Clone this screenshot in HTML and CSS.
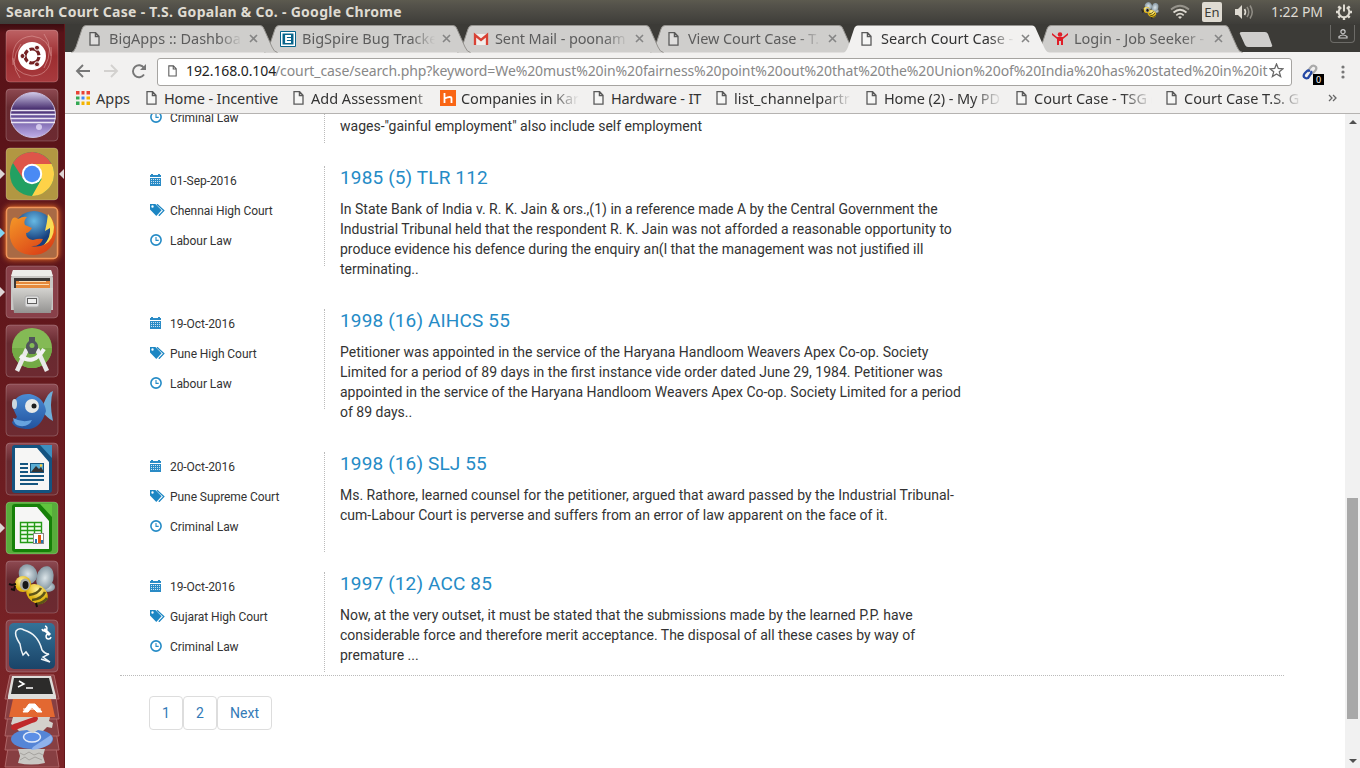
FILE: index.html
```
<!DOCTYPE html>
<html lang="en">
<head>
<meta charset="utf-8">
<title>Search Court Case - T.S. Gopalan &amp; Co.</title>
<link rel="stylesheet" href="styles.css">
</head>
<body>
<svg class="defs" width="0" height="0">
  <defs>
    <linearGradient id="tileRed" x2="0" y2="1"><stop offset="0" stop-color="#8e4a52"/><stop offset=".35" stop-color="#682a30"/><stop offset="1" stop-color="#6d2a31"/></linearGradient>
    <linearGradient id="ubuntu" x2="0" y2="1"><stop offset="0" stop-color="#bd6264"/><stop offset=".5" stop-color="#9d2d30"/><stop offset="1" stop-color="#a83a3e"/></linearGradient>
    <linearGradient id="eclipse" x2="0" y2="1"><stop offset="0" stop-color="#cfc8e6"/><stop offset=".38" stop-color="#442a6c"/><stop offset=".55" stop-color="#6a55a0"/><stop offset="1" stop-color="#bfaee8"/></linearGradient>
    <linearGradient id="steel" x2="0" y2="1"><stop offset="0" stop-color="#d4d3d0"/><stop offset="1" stop-color="#949391"/></linearGradient>
    <radialGradient id="globe" cx=".5" cy=".25"><stop offset="0" stop-color="#67b9e4"/><stop offset="1" stop-color="#173f7d"/></radialGradient>
    <linearGradient id="fox" x2=".8" y2="1"><stop offset="0" stop-color="#f59a28"/><stop offset="1" stop-color="#d93d16"/></linearGradient>
    <linearGradient id="fish" x2="0" y2="1"><stop offset="0" stop-color="#4a8bd4"/><stop offset="1" stop-color="#22539e"/></linearGradient>
    <linearGradient id="navy" x2="0" y2="1"><stop offset="0" stop-color="#347298"/><stop offset="1" stop-color="#1a4468"/></linearGradient>
    <radialGradient id="wing"><stop offset="0" stop-color="#dce5e9"/><stop offset="1" stop-color="#8799a4"/></radialGradient>
    <radialGradient id="yellow" cx=".4" cy=".3"><stop offset="0" stop-color="#fff49a"/><stop offset="1" stop-color="#e0b413"/></radialGradient>
    <symbol id="page" viewBox="0 0 11 14"><path d="M1 .7h5.6L10 4.2v9H1zM6.4.9v3.6h3.5" fill="#fff" fill-opacity=".35" stroke="#5a5a5a" stroke-width="1.3"/></symbol>
    <symbol id="calendar" viewBox="0 0 12 12"><path d="M0 1h1V0h2v1h5V0h2v1h1v2H0zM0 4h11v8H0z" fill="#2a8bc6"/><path d="M1 5.500h9M1 7.500h9M1 9.500h9" stroke="#fff" stroke-opacity=".75" stroke-dasharray="1 1" shape-rendering="crispEdges"/></symbol>
    <symbol id="tags" viewBox="0 0 15 12"><path fill-rule="evenodd" d="M0 0h5.4l6.2 6.3L6.3 12 0 5.5zM2.5 1.3a1.2 1.2 0 100 2.4 1.2 1.2 0 000-2.4z" fill="#1c86c3"/><path d="M7 .3l6.8 6.3-5 5.2" fill="none" stroke="#1c86c3" stroke-width="1.3"/></symbol>
    <symbol id="clock" viewBox="0 0 12 12"><circle cx="6" cy="6" r="5.1" fill="none" stroke="#258bc6" stroke-width="1.6"/><path d="M6 3v3.4h2.7" fill="none" stroke="#258bc6" stroke-width="1.1"/></symbol>
    <symbol id="bee" viewBox="0 0 52 52">
      <ellipse cx="42" cy="26" rx="7" ry="5" fill="url(#wing)"/>
      <ellipse cx="22" cy="13" rx="9" ry="10" transform="rotate(-30 22 13)" fill="url(#wing)"/>
      <ellipse cx="39" cy="17" rx="8.500" ry="12" transform="rotate(14 39 17)" fill="url(#wing)"/>
      <ellipse cx="31" cy="33" rx="11.500" ry="9" transform="rotate(35 31 33)" fill="url(#yellow)"/>
      <path d="M35 27q-3 6-12 7M39 31q-3 7-13 8M41 37q-3 5-11 6" fill="none" stroke="#5c5418" stroke-width="2.500"/>
      <circle cx="17" cy="23" r="8" fill="url(#yellow)"/><ellipse cx="19" cy="23.500" rx="5" ry="6" fill="#a9aca6"/><ellipse cx="19.500" cy="24" rx="3" ry="4" fill="#171717"/>
      <path d="M10 23l-4 1-3-1M9 25l-1 4-3-1M30 42l1 4" fill="none" stroke="#160e0b" stroke-width="2"/>
    </symbol>
    <symbol id="tab" viewBox="0 0 207 28"><path d="M.5 27.5Q3 27 5 22L11 4Q12 .5 15 .5H189Q192 .5 193 4L201 22Q203 27 206.5 27.5" fill="#cfcecc" stroke="#95938f"/></symbol>
    <symbol id="tabOn" viewBox="0 0 207 28"><path d="M.5 28Q3 27 5 22L11 4Q12 .5 15 .5H189Q192 .5 193 4L201 22Q203 27 206.5 28" fill="#f2f1f0"/></symbol>
  </defs>
</svg>

<header class="panel">
  <span class="window-title">Search Court Case - T.S. Gopalan &amp; Co. - Google Chrome</span>
  <div class="indicators">
    <svg class="ind-bee" width="22" height="20"><use href="#bee" width="22" height="20"/></svg>
    <svg class="ind-wifi" width="20" height="16" viewBox="0 0 20 16" fill="none" stroke-width="1.7"><path d="M1 5.5Q10-2 19 5.5" stroke="#96938b"/><path d="M3.5 8.5Q10 3 16.500 8.500M6.300 11.300Q10 8 13.700 11.300" stroke="#dfdbd2"/><path d="M8 13q2-1.500 4 0l-2 2z" fill="#dfdbd2"/></svg>
    <span class="lang">En</span>
    <svg class="ind-sound" width="20" height="16" viewBox="0 0 20 16"><path d="M1 5h3l4-4v14l-4-4H1z" fill="#dfdbd2"/><path d="M10.500 5q2 3 0 6" fill="none" stroke="#dfdbd2" stroke-width="1.600"/><path d="M13 3q3.500 5 0 10M16 1.500q4.500 6.500 0 13" fill="none" stroke="#918e86" stroke-width="1.500"/></svg>
    <span class="time">1:22 PM</span>
    <svg class="ind-gear" width="18" height="18" viewBox="0 0 18 18" fill="none" stroke="#dfdbd2"><path d="M6.300 4.400a5.300 5.300 0 105.400 0" stroke-width="2"/><path d="M9 1.500v7" stroke-width="2"/><path d="M1 9h3M14 9h3M9 14v3M3.300 14.700l2-2M12.700 12.700l2 2M3.300 3.300l2 2M12.700 5.300l2-2" stroke-width="2.400"/></svg>
  </div>
</header>

<div class="desktop">
  <nav class="launcher">
    <svg class="tile" viewBox="0 0 52 52"><rect class="plate" width="52" height="52" rx="4" fill="url(#ubuntu)"/><path d="M7 35Q4 8 26 6q18 2 19 20M45 17q3 28-19 29Q7 43 7 28M14 48Q2 32 15 14M38 4q11 15 0 34" fill="none" stroke="#e2a4a3" opacity=".55"/><circle cx="26" cy="26" r="14" fill="#fff"/><circle cx="26" cy="26" r="7" fill="none" stroke="#742022" stroke-width="3.200" stroke-dasharray="12.600 2.060" stroke-dashoffset="-1"/><g fill="#742022" stroke="#fff"><circle cx="16.500" cy="26" r="2.500"/><circle cx="31" cy="17.700" r="2.500"/><circle cx="31" cy="34.300" r="2.500"/></g></svg>
    <svg class="tile" viewBox="0 0 52 52"><rect class="plate" width="52" height="52" rx="4" fill="url(#tileRed)"/><circle cx="27" cy="26" r="22.500" fill="url(#eclipse)" stroke="#c9bfe0"/><path d="M5 21.500h44M4.500 25.500h45M4.500 29.500h45M5 33.500h44" stroke="#eae5f3" stroke-width="1.300"/><circle cx="33" cy="38" r="3" fill="#efe8ff" opacity=".7"/></svg>
    <div class="slot"><svg class="tile" viewBox="0 0 52 52"><rect class="plate" width="52" height="52" rx="4" fill="#b29742"/><circle cx="26" cy="26" r="22" fill="#22a062"/><path d="M6.950 15A22 22 0 0145.600 16H26l-8.700 15z" fill="#de5549"/><path d="M45.600 16A22 22 0 0126 48l9.600-17L26 16z" fill="#fed248"/><circle cx="26" cy="26" r="10.200" fill="#fff"/><circle cx="26" cy="26" r="8.200" fill="#4a8af4"/></svg><i class="pip"></i><i class="pip pip-right"></i></div>
    <div class="slot"><svg class="tile glow" viewBox="0 0 52 52"><rect x=".5" y=".5" width="51" height="51" rx="4" fill="#a96a45" stroke="#f0955a" stroke-width="1.500"/><circle cx="28" cy="24" r="20" fill="url(#globe)"/><path d="M5 15Q7 8 12 12q5-3 9-2-4 4-2 8l7 3q-3 5-6 5 0 6 7 7 6-2 10-1-3 8-12 7 16 3 20-12Q50 18 43 8q10 12 6 24-5 15-21 16Q8 48 4 31q-1-9 1-16z" fill="url(#fox)"/><path d="M42 7q-1 9-3 17l5-3q1 9-6 17 10-5 10-18Q47 12 42 7z" fill="#f9dc54"/></svg><i class="pip pip-blue"></i></div>
    <div class="slot"><svg class="tile" viewBox="0 0 52 52"><rect class="plate" width="52" height="52" rx="4" fill="#884049"/><path d="M7 4h38l2 8v32H5V12z" fill="#c8c7c5"/><path d="M5 10h42L45 4H7z" fill="#ececea"/><path d="M8 12h36v15H8z" fill="#3a3736"/><path d="M10 15h34v7H10z" fill="#e5893b"/><path d="M13 15.500h27M10 18.500h33" stroke="#fbddb3"/><path d="M6 22h41l-2 25H8z" fill="url(#steel)"/><rect x="19" y="30" width="14" height="11" rx="2" fill="#ddd" stroke="#aaa"/><rect x="21.500" y="32.500" width="9" height="5" fill="#eee" stroke="#5f5f5f"/></svg><i class="pip"></i></div>
    <svg class="tile" viewBox="0 0 52 52"><rect class="plate" width="52" height="52" rx="4" fill="url(#tileRed)"/><circle cx="26" cy="23" r="20" fill="#84ba55"/><path d="M6 23a20 20 0 0040 0z" fill="#73ab45"/><path d="M21 24L11 46M31 24l10 22" stroke="#e8e8e8" stroke-width="4.500"/><path d="M14 31q14 10 24-7" fill="none" stroke="#f1f1f1" stroke-width="4"/><path d="M23 12h6v4q5 4 2 9l-2 4h-6l-2-4q-3-5 2-9z" fill="#50545b"/><circle cx="26" cy="20.500" r="2.500" fill="#84ba55"/></svg>
    <svg class="tile" viewBox="0 0 52 52"><rect class="plate" width="52" height="52" rx="4" fill="url(#tileRed)"/><path d="M37 21Q42 8 47 7q-4 12 0 30-6-3-10-9z" fill="#6eadd9"/><path d="M6 22Q10 9 24 10q14 3 16 17-5 17-17 18Q8 45 6 38l5-5z" fill="url(#fish)"/><path d="M7 34q9 5 19 2-3 7-12 6-6-1-7-8z" fill="#67a3df"/><circle cx="26" cy="22" r="7" fill="#e7e9e8"/><circle cx="28" cy="22" r="2.500" fill="#1c1d1e"/><ellipse cx="8.500" cy="20" rx="2.500" ry="5" fill="#ccd8df"/></svg>
    <svg class="tile" viewBox="0 0 52 52"><rect class="plate" width="52" height="52" rx="4" fill="url(#tileRed)"/><rect x="6" y="2" width="40" height="48" rx="3" fill="#145380"/><path d="M9 5h22l12 14v28H9z" fill="#f6f6f5"/><path d="M34 2h12v13z" fill="#3d8fc0"/><path d="M14 21h8M14 25h8M14 29h8M14 33h24M14 37h24M14 41h18" stroke="#155680" stroke-width="2"/><rect x="24.500" y="20.500" width="13" height="9" fill="#5aadd3" stroke="#155680"/><path d="M25 29l5-6 3 3 2-2 3 5z" fill="#333"/><circle cx="35" cy="22.500" r="1.300" fill="#fc3"/></svg>
    <div class="slot"><svg class="tile" viewBox="0 0 52 52"><rect class="plate" width="52" height="52" rx="4" fill="#58ac3b"/><rect x="6" y="2" width="40" height="48" rx="3" fill="#168008"/><path d="M9 5h22l12 14v28H9z" fill="#f6f6f5"/><path d="M34 2h12v13z" fill="#61c53e"/><path d="M14 20h22v20H14z" fill="#f1fdec"/><path d="M14.500 20.500h21v20h-21zM21.500 20v20M28.500 20v20M14 24.500h22M14 28.500h22M14 32.500h22M14 36.500h22" fill="none" stroke="#259a17" stroke-width="1.400"/><rect x="27.500" y="31.500" width="10" height="10" fill="#fff" stroke="#888"/><path d="M29 37h2v4h-2zM35 38h2v3h-2z" fill="#2475b0"/><path d="M32 33h3v8h-3z" fill="#e35a0a"/></svg><i class="pip"></i></div>
    <svg class="tile" viewBox="0 0 52 52"><rect class="plate" width="52" height="52" rx="4" fill="url(#tileRed)"/><use href="#bee" width="52" height="52"/></svg>
    <svg class="tile" viewBox="0 0 52 52"><rect class="plate" width="52" height="52" rx="4" fill="#884149"/><rect x="3" y="3" width="46" height="46" rx="5" fill="url(#navy)"/><path d="M23 36l-3-4-3 3q-2-4-3-11-6-9-4-13 3-4 8-1 14 4 18 20 3 4 7 4l-6 3 7 5-9-3" fill="none" stroke="#eef4f7" stroke-width="1.500"/><path d="M38 9l6 6" stroke="#fff" stroke-width="3"/><path d="M36 9a2.500 2.500 0 103-3M42 14a2.500 2.500 0 103 3" stroke="#fff" stroke-width="1.500" fill="none"/></svg>
    <svg class="stack" width="60" height="95" viewBox="0 0 60 95">
      <g stroke="#ae6668" fill="#873f42"><path d="M6 74h48l3 19H3z"/><path d="M6 57h48l3 19H3z"/><path d="M6 41h48l3 21H3z"/><path d="M6 23h48l3 22H3z"/><path d="M8 1h44l5 24H3z"/></g>
      <path d="M16 75h27l-2 7 2 7q-14 3-27 0l2-7z" fill="#c9c8c4"/><path d="M18 79l4 2 5-3 5 3 5-2 4 2M18 86l5-3 4 3 6-3 7 3" fill="none" stroke="#a5a39f"/>
      <ellipse cx="30" cy="65" rx="21" ry="10" fill="#5585d6"/><path d="M31 73l18-12q4 5-3 10-6 4-17 5z" fill="#8fb2ec"/><ellipse cx="30" cy="63" rx="8.500" ry="5" fill="#5d8fe6" stroke="#e3ecfa" stroke-width="1.500"/>
      <path d="M11 43h37l-1 4 4 2-1 5-5-1-4 4-5-1-5 3-6-3-8 1-5-5-3-2z" fill="#d3d1cc"/><path d="M9 54q0-4 6-5l14-5q6-3 7 0 0 4-6 5l-14 6q-5 3-7-1z" fill="#bf292b"/>
      <path d="M11 25h38l4 18H7z" fill="#e36831"/><path d="M21 38l6-8h6l7 8h-5l-5-5-4 5zM21 35h18" fill="#fff" stroke="#fff"/>
      <path d="M10 2h39l5 20v3H6v-3z" fill="#deddda"/><path d="M12 4h35l4 16H9z" fill="#2c2b2a"/><path d="M17 7l5 3-6 3M24 14h7" fill="none" stroke="#fff" stroke-width="1.500"/>
    </svg>
  </nav>

  <div class="browser">
    <div class="tabs">
      <div class="tab"><svg class="tab-shape"><use href="#tab"/></svg><svg class="page"><use href="#page"/></svg><span class="tab-text">BigApps :: Dashboa</span><svg class="close" viewBox="0 0 9 9"><path d="M1 1l7 7M8 1L1 8"/></svg></div>
      <div class="tab"><svg class="tab-shape"><use href="#tab"/></svg><svg class="fav" viewBox="0 0 16 16"><path d="M.500.500h15v15H.500z" fill="#fff" stroke="#08648b"/><path d="M2.500 2.500h11v11h-11z" fill="#08648b"/><path d="M11 5H6v6h5M6 8h5" fill="none" stroke="#fff" stroke-width="1.800"/></svg><span class="tab-text">BigSpire Bug Tracke</span><svg class="close" viewBox="0 0 9 9"><path d="M1 1l7 7M8 1L1 8"/></svg></div>
      <div class="tab"><svg class="tab-shape"><use href="#tab"/></svg><svg class="fav" viewBox="0 0 16 16"><path d="M1 3h14v11H1z" fill="#f2efec"/><path d="M2 14V4l6 5 6-5v10" fill="none" stroke="#d94235" stroke-width="2.300"/></svg><span class="tab-text tight">Sent Mail - poonam</span><svg class="close" viewBox="0 0 9 9"><path d="M1 1l7 7M8 1L1 8"/></svg></div>
      <div class="tab"><svg class="tab-shape"><use href="#tab"/></svg><svg class="page"><use href="#page"/></svg><span class="tab-text tight">View Court Case - T.</span><svg class="close" viewBox="0 0 9 9"><path d="M1 1l7 7M8 1L1 8"/></svg></div>
      <div class="tab active"><svg class="tab-shape"><use href="#tabOn"/></svg><svg class="page"><use href="#page"/></svg><span class="tab-text">Search Court Case -</span><svg class="close" viewBox="0 0 9 9"><path d="M1 1l7 7M8 1L1 8"/></svg></div>
      <div class="tab"><svg class="tab-shape"><use href="#tab"/></svg><svg class="fav" viewBox="0 0 16 16" fill="#e01d27"><circle cx="8" cy="3.500" r="2.300"/><path d="M0 2l5 4h6l5-4v2l-5 4v6H9v-4H7v4H5V8L0 4z"/></svg><span class="tab-text">Login - Job Seeker -</span><svg class="close" viewBox="0 0 9 9"><path d="M1 1l7 7M8 1L1 8"/></svg></div>
      <svg class="new-tab" width="34" height="17"><path d="M3 1h23q2 0 3 2l4 11q1 2-2 2H9q-2 0-3-2L1 3q-1-2 2-2z" fill="#cfcecc"/></svg>
      <div class="profile"><svg width="10" height="10" viewBox="0 0 10 10"><circle cx="5" cy="2.700" r="2.100" fill="none" stroke="#ccc" stroke-width="1.200"/><path d="M1 9V7.500Q5 4.500 9 7.500V9z" fill="none" stroke="#ccc" stroke-width="1.200"/></svg></div>
    </div>

    <div class="toolbar">
      <svg class="nav-icons" width="76" height="20" viewBox="0 0 76 20" fill="none" stroke-width="1.900"><path d="M15 10H2M8 4l-6 6 6 6" stroke="#777"/><path d="M29 10h13M36 4l6 6-6 6" stroke="#d3d1cf"/><path d="M69 13.500A6 6 0 1169 7" stroke="#777"/><path d="M71 3v6h-6z" fill="#777"/></svg>
      <div class="omnibox"><svg class="page small"><use href="#page"/></svg><span class="host">192.168.0.104</span><span class="path">/court_case/search.php?keyword=We%20must%20in%20fairness%20point%20out%20that%20the%20Union%20of%20India%20has%20stated%20in%20it</span><svg class="star" width="15" height="15" viewBox="0 0 15 15"><path d="M7.500 1l1.800 4.500 4.700.300-3.700 3 1.300 4.700-4.100-2.600-4.100 2.600 1.300-4.700-3.700-3 4.700-.300z" fill="none" stroke="#686868" stroke-width="1.300"/></svg></div>
      <div class="extension"><svg width="16" height="16" viewBox="0 0 16 16" fill="none" stroke-width="2.300"><path d="M7 8q-1-2 1-4l2-2q2-1 4 1 1 2-1 4l-2 2q-2 1-3 0" stroke="#aaa"/><path d="M9 7q1 2-1 4l-2 3q-2 1-4-1-1-2 1-4l2-2q1-1 3 0" stroke="#2548a4"/></svg><span class="badge">0</span></div>
      <svg class="more" width="4" height="14" fill="#777"><circle cx="2" cy="2" r="1.600"/><circle cx="2" cy="7" r="1.600"/><circle cx="2" cy="12" r="1.600"/></svg>
    </div>

    <div class="bookmarks">
      <a class="bm apps"><svg width="14" height="14" viewBox="0 0 14 14"><path d="M0 0h4v4H0zM5 0h4v4H5zM10 0h4v4h-4z" fill="#e94235"/><path d="M0 5h4v4H0z" fill="#34a853"/><path d="M5 5h4v4H5z" fill="#4285f4"/><path d="M10 5h4v4h-4zM5 10h4v4H5zM10 10h4v4h-4z" fill="#f4b400"/><path d="M0 10h4v4H0z" fill="#34a853"/><path d="M4.500 0v14M9.500 0v14M0 4.500h14M0 9.500h14" stroke="#f2f1f0" stroke-width="2"/></svg><span class="bm-text b0">Apps</span></a>
      <a class="bm b147"><svg class="page"><use href="#page"/></svg><span class="bm-text b1">Home - Incentive</span></a>
      <a class="bm b147"><svg class="page"><use href="#page"/></svg><span class="bm-text fade end">Add Assessment</span></a>
      <a class="bm b153"><svg class="hacker" width="16" height="16"><path d="M0 0h16v16H0z" fill="#f96514"/><path d="M4.500 3v10M4.500 8.500q7-3 7 0V13" fill="none" stroke="#fff" stroke-width="1.800"/></svg><span class="bm-text b3 fade">Companies in Kar</span></a>
      <a class="bm b123"><svg class="page"><use href="#page"/></svg><span class="bm-text b4">Hardware - IT</span></a>
      <a class="bm b150"><svg class="page"><use href="#page"/></svg><span class="bm-text b5 fade">list_channelpartr</span></a>
      <a class="bm b150"><svg class="page"><use href="#page"/></svg><span class="bm-text b6 fade">Home (2) - My PD</span></a>
      <a class="bm b150"><svg class="page"><use href="#page"/></svg><span class="bm-text b7 fade">Court Case - TSG (</span></a>
      <a class="bm b150"><svg class="page"><use href="#page"/></svg><span class="bm-text b8 fade">Court Case T.S. G</span></a>
      <svg class="overflow" width="9" height="8" viewBox="0 0 9 8"><path d="M1 1l3 3-3 3M5 1l3 3-3 3" fill="none" stroke="#666" stroke-width="1.300"/></svg>
    </div>

    <div class="viewport">
      <main class="content">
        <section class="results">
          <article class="result clipped">
            <ul class="meta"><li><svg class="ic"><use href="#clock"/></svg>Criminal Law</li></ul>
            <div class="body"><p>wages-"gainful employment" also include self employment</p></div>
          </article>
          <article class="result">
            <ul class="meta"><li><svg class="ic"><use href="#calendar"/></svg>01-Sep-2016</li><li><svg class="ic tagic"><use href="#tags"/></svg>Chennai High Court</li><li><svg class="ic"><use href="#clock"/></svg>Labour Law</li></ul>
            <div class="body"><h3>1985 (5) TLR 112</h3><p>In State Bank of India v. R. K. Jain &amp; ors.,(1) in a reference made A by the Central Government the<br>Industrial Tribunal held that the respondent R. K. Jain was not afforded a reasonable opportunity to<br>produce evidence his defence during the enquiry an(l that the management was not justified ill<br>terminating..</p></div>
          </article>
          <article class="result">
            <ul class="meta"><li><svg class="ic"><use href="#calendar"/></svg>19-Oct-2016</li><li><svg class="ic tagic"><use href="#tags"/></svg>Pune High Court</li><li><svg class="ic"><use href="#clock"/></svg>Labour Law</li></ul>
            <div class="body"><h3>1998 (16) AIHCS 55</h3><p>Petitioner was appointed in the service of the Haryana Handloom Weavers Apex Co-op. Society<br>Limited for a period of 89 days in the first instance vide order dated June 29, 1984. Petitioner was<br>appointed in the service of the Haryana Handloom Weavers Apex Co-op. Society Limited for a period<br>of 89 days..</p></div>
          </article>
          <article class="result">
            <ul class="meta"><li><svg class="ic"><use href="#calendar"/></svg>20-Oct-2016</li><li><svg class="ic tagic"><use href="#tags"/></svg>Pune Supreme Court</li><li><svg class="ic"><use href="#clock"/></svg>Criminal Law</li></ul>
            <div class="body"><h3>1998 (16) SLJ 55</h3><p>Ms. Rathore, learned counsel for the petitioner, argued that award passed by the Industrial Tribunal-<br>cum-Labour Court is perverse and suffers from an error of law apparent on the face of it.</p></div>
          </article>
          <article class="result last">
            <ul class="meta"><li><svg class="ic"><use href="#calendar"/></svg>19-Oct-2016</li><li><svg class="ic tagic"><use href="#tags"/></svg>Gujarat High Court</li><li><svg class="ic"><use href="#clock"/></svg>Criminal Law</li></ul>
            <div class="body"><h3>1997 (12) ACC 85</h3><p>Now, at the very outset, it must be stated that the submissions made by the learned P.P. have<br>considerable force and therefore merit acceptance. The disposal of all these cases by way of<br>premature ...</p></div>
          </article>
        </section>
        <div class="pagination"><a class="pg">1</a><a class="pg">2</a><a class="pg next">Next</a></div>
      </main>
      <div class="scrollbar"><i class="arrow up"></i><i class="thumb"></i><i class="arrow down"></i></div>
    </div>
  </div>
</div>
</body>
</html>
```

FILE: styles.css
```
* { box-sizing: border-box; }
body { margin: 0; width: 1360px; height: 768px; overflow: hidden; display: flex; flex-direction: column; background: #fff; font-family: "Noto Sans", sans-serif; }
.defs { position: absolute; }
svg { display: block; flex: none; }

.panel { height: 24px; flex: none; display: flex; align-items: center; justify-content: space-between; padding: 0 7px 0 6px; background: linear-gradient(#5c5a4f, #55534b 20%, #3e3d39); color: #dfdbd2; }
.window-title { font-size: 14px; font-weight: 700; line-height: 20px; white-space: nowrap; letter-spacing: 0.28px; }
.indicators { display: flex; align-items: center; height: 24px; }
.ind-bee { margin: -2px 9px 0 0; }
.ind-wifi { margin-right: 12px; }
.lang { width: 20px; height: 20px; border-radius: 2px; background: #dfdbd2; color: #3c3b37; font-size: 13px; line-height: 21px; text-align: center; margin-right: 12px; }
.ind-sound { margin-right: 17px; }
.time { width: 52px; font-size: 14px; white-space: nowrap; letter-spacing: -0.1px; margin: -2px 12px 0 0; }

.desktop { flex: 1; display: flex; min-height: 0; }
.launcher { width: 65px; flex: none; padding: 6px 0 0 6px; display: flex; flex-direction: column; gap: 7px; background: linear-gradient(#3c0c10, #591318 9px, #5d151a 30%, #7b2427 90%); border-right: 1px solid #64161a; overflow: hidden; }
.tile { width: 52px; height: 52px; overflow: visible; }
.plate { stroke: #fff; stroke-opacity: .2; }
.glow { filter: drop-shadow(0 0 3px #ff7f2a); }
.slot { position: relative; width: 59px; height: 52px; }
.pip { position: absolute; left: -6px; top: 21px; border: 5px solid transparent; border-left-color: #ded5d5; border-right-width: 0; }
.pip-right { left: 53px; border-right: 5px solid #ded5d5; border-left-width: 0; }
.pip-blue { border-left-color: #81d4f4; }
.stack { margin: -5px 0 0 -4px; }

.browser { flex: 1; min-width: 0; display: flex; flex-direction: column; }
.tabs { height: 29px; flex: none; display: flex; padding: 1px 0 0 6px; background: #3c3b37; border-bottom: 1px solid #f2f1f0; position: relative; }
.tab { position: relative; width: 193px; height: 28px; flex: none; display: flex; align-items: center; padding-left: 18px; }
.tab:nth-child(1) { z-index: 6; }
.tab:nth-child(2) { z-index: 5; }
.tab:nth-child(3) { z-index: 4; }
.tab:nth-child(4) { z-index: 3; }
.tab.active { z-index: 9; }
.tab-shape { position: absolute; left: 0; top: 0; width: 207px; height: 28px; }
.page { width: 11px; height: 14px; position: relative; }
.tab .page { margin-right: 9px; }
.fav { width: 16px; height: 16px; margin: 0 6px 0 -2px; position: relative; }
.tab-text { position: relative; top: -1px; width: 136px; white-space: nowrap; font-size: 14.500px; line-height: 26px; color: #5c5c5c; -webkit-mask-image: linear-gradient(90deg, #000 80%, transparent 98%); mask-image: linear-gradient(90deg, #000 80%, transparent 98%); }
.tab-text.tight { letter-spacing: -0.1px; }
.active .tab-text { color: #333; }
.close { position: relative; width: 9px; height: 9px; margin: -1px 0 0 4px; flex: none; fill: none; stroke: #858585; stroke-width: 1.600; }
.new-tab { margin: 6px 0 0 10px; }
.profile { width: 25px; height: 18px; margin: 0 5px 0 auto; border: 1px solid #6c6b67; border-top: 0; border-radius: 0 0 4px 4px; display: flex; align-items: center; justify-content: center; }

.toolbar { height: 33px; flex: none; display: flex; align-items: center; padding: 4px 0 0 10px; background: #f2f1f0; }
.nav-icons { margin: -2px 6px 0 0; }
.omnibox { width: 1135px; height: 28px; border: 1px solid #a6a4a1; border-radius: 3px; background: #fff; display: flex; align-items: center; padding: 0 7px 2px 10px; font-size: 14px; white-space: nowrap; }
.page.small { width: 9px; height: 12px; margin-right: 9px; }
.host { width: 89px; color: #222; letter-spacing: -0.1px; }
.path { width: 992px; color: #888; letter-spacing: -0.1px; }
.star { margin-left: 2px; }
.extension { position: relative; width: 22px; height: 16px; margin-left: 10px; }
.badge { position: absolute; left: 11px; top: 10px; width: 11px; height: 11px; background: #000; color: #fff; font-size: 9px; line-height: 11px; text-align: center; }
.more { margin-left: 17px; }

.bookmarks { height: 28px; flex: none; display: flex; align-items: center; padding: 0 0 3px 11px; background: #f2f1f0; border-bottom: 1px solid #b5b3b1; }
.bm { display: flex; align-items: center; flex: none; width: 150px; }
.bm.apps { width: 70px; }
.bm.b147 { width: 147px; }
.bm.b153 { width: 153px; }
.bm.b123 { width: 123px; }
.bm .page { margin-right: 7px; }
.bm.apps svg { margin-right: 6px; }
.hacker { margin-right: 5px; }
.bm-text { width: 118px; white-space: nowrap; font-size: 14.500px; line-height: 22px; color: #333; }
.b0 { width: 40px; }
.b1, .b3 { letter-spacing: -0.12px; }
.b4 { width: 95px; letter-spacing: -0.15px; }
.b5 { letter-spacing: 0.1px; }
.b6 { letter-spacing: -0.12px; }
.fade { -webkit-mask-image: linear-gradient(90deg, #000 75%, transparent); mask-image: linear-gradient(90deg, #000 75%, transparent); }
.end { -webkit-mask-image: linear-gradient(90deg, #000 88%, transparent); mask-image: linear-gradient(90deg, #000 88%, transparent); }
.overflow { margin-left: 12px; }

.viewport { flex: 1; min-height: 0; display: flex; font-family: Roboto, sans-serif; color: #333; }
.content { flex: 1; min-width: 0; overflow: hidden; }
.results { margin: 0 61px 0 55px; padding-left: 30px; border-bottom: 1px dotted #bbb; }
.result { display: flex; align-items: flex-start; margin-bottom: 20px; }
.meta { list-style: none; margin: 0; padding: 0; width: 175px; height: 100px; border-right: 1px dotted #bbb; font-size: 12px; letter-spacing: -0.06px; }
.meta li { display: flex; align-items: center; height: 30px; }
.ic { width: 12px; height: 12px; margin: -2px 8px 0 0; }
.tagic { width: 15px; margin-right: 5px; }
.body { padding: 0 0 10px 15px; white-space: nowrap; }
h3 { margin: 0; height: 33px; padding-top: 1px; line-height: 22px; font-size: 19px; font-weight: 400; letter-spacing: .14px; color: #258bc6; }
p { margin: 0; font-size: 14px; line-height: 20px; }
.clipped { height: 52px; margin: 0; }
.clipped .meta { height: 29px; }
.clipped li { margin-top: -11px; }
.clipped .body { padding-top: 2px; }
.last { margin-bottom: 0; }
.pagination { display: flex; margin: 20px 0 0 84px; }
.pg { width: 34px; height: 34px; border: 1px solid #ddd; border-radius: 4px; font-size: 14px; line-height: 32px; text-align: center; color: #337ab7; }
.pg.next { width: 55px; }
.scrollbar { width: 15px; background: #f1f1f1; display: flex; flex-direction: column; align-items: center; padding: 6px 0 5px; }
.arrow { border: 4px solid transparent; }
.up { border-bottom: 4px solid #505050; border-top: 0; }
.down { border-top: 4px solid #505050; border-bottom: 0; margin-top: auto; }
.thumb { width: 11px; height: 221px; margin-top: 374px; background: #a8a8a8; }
```
